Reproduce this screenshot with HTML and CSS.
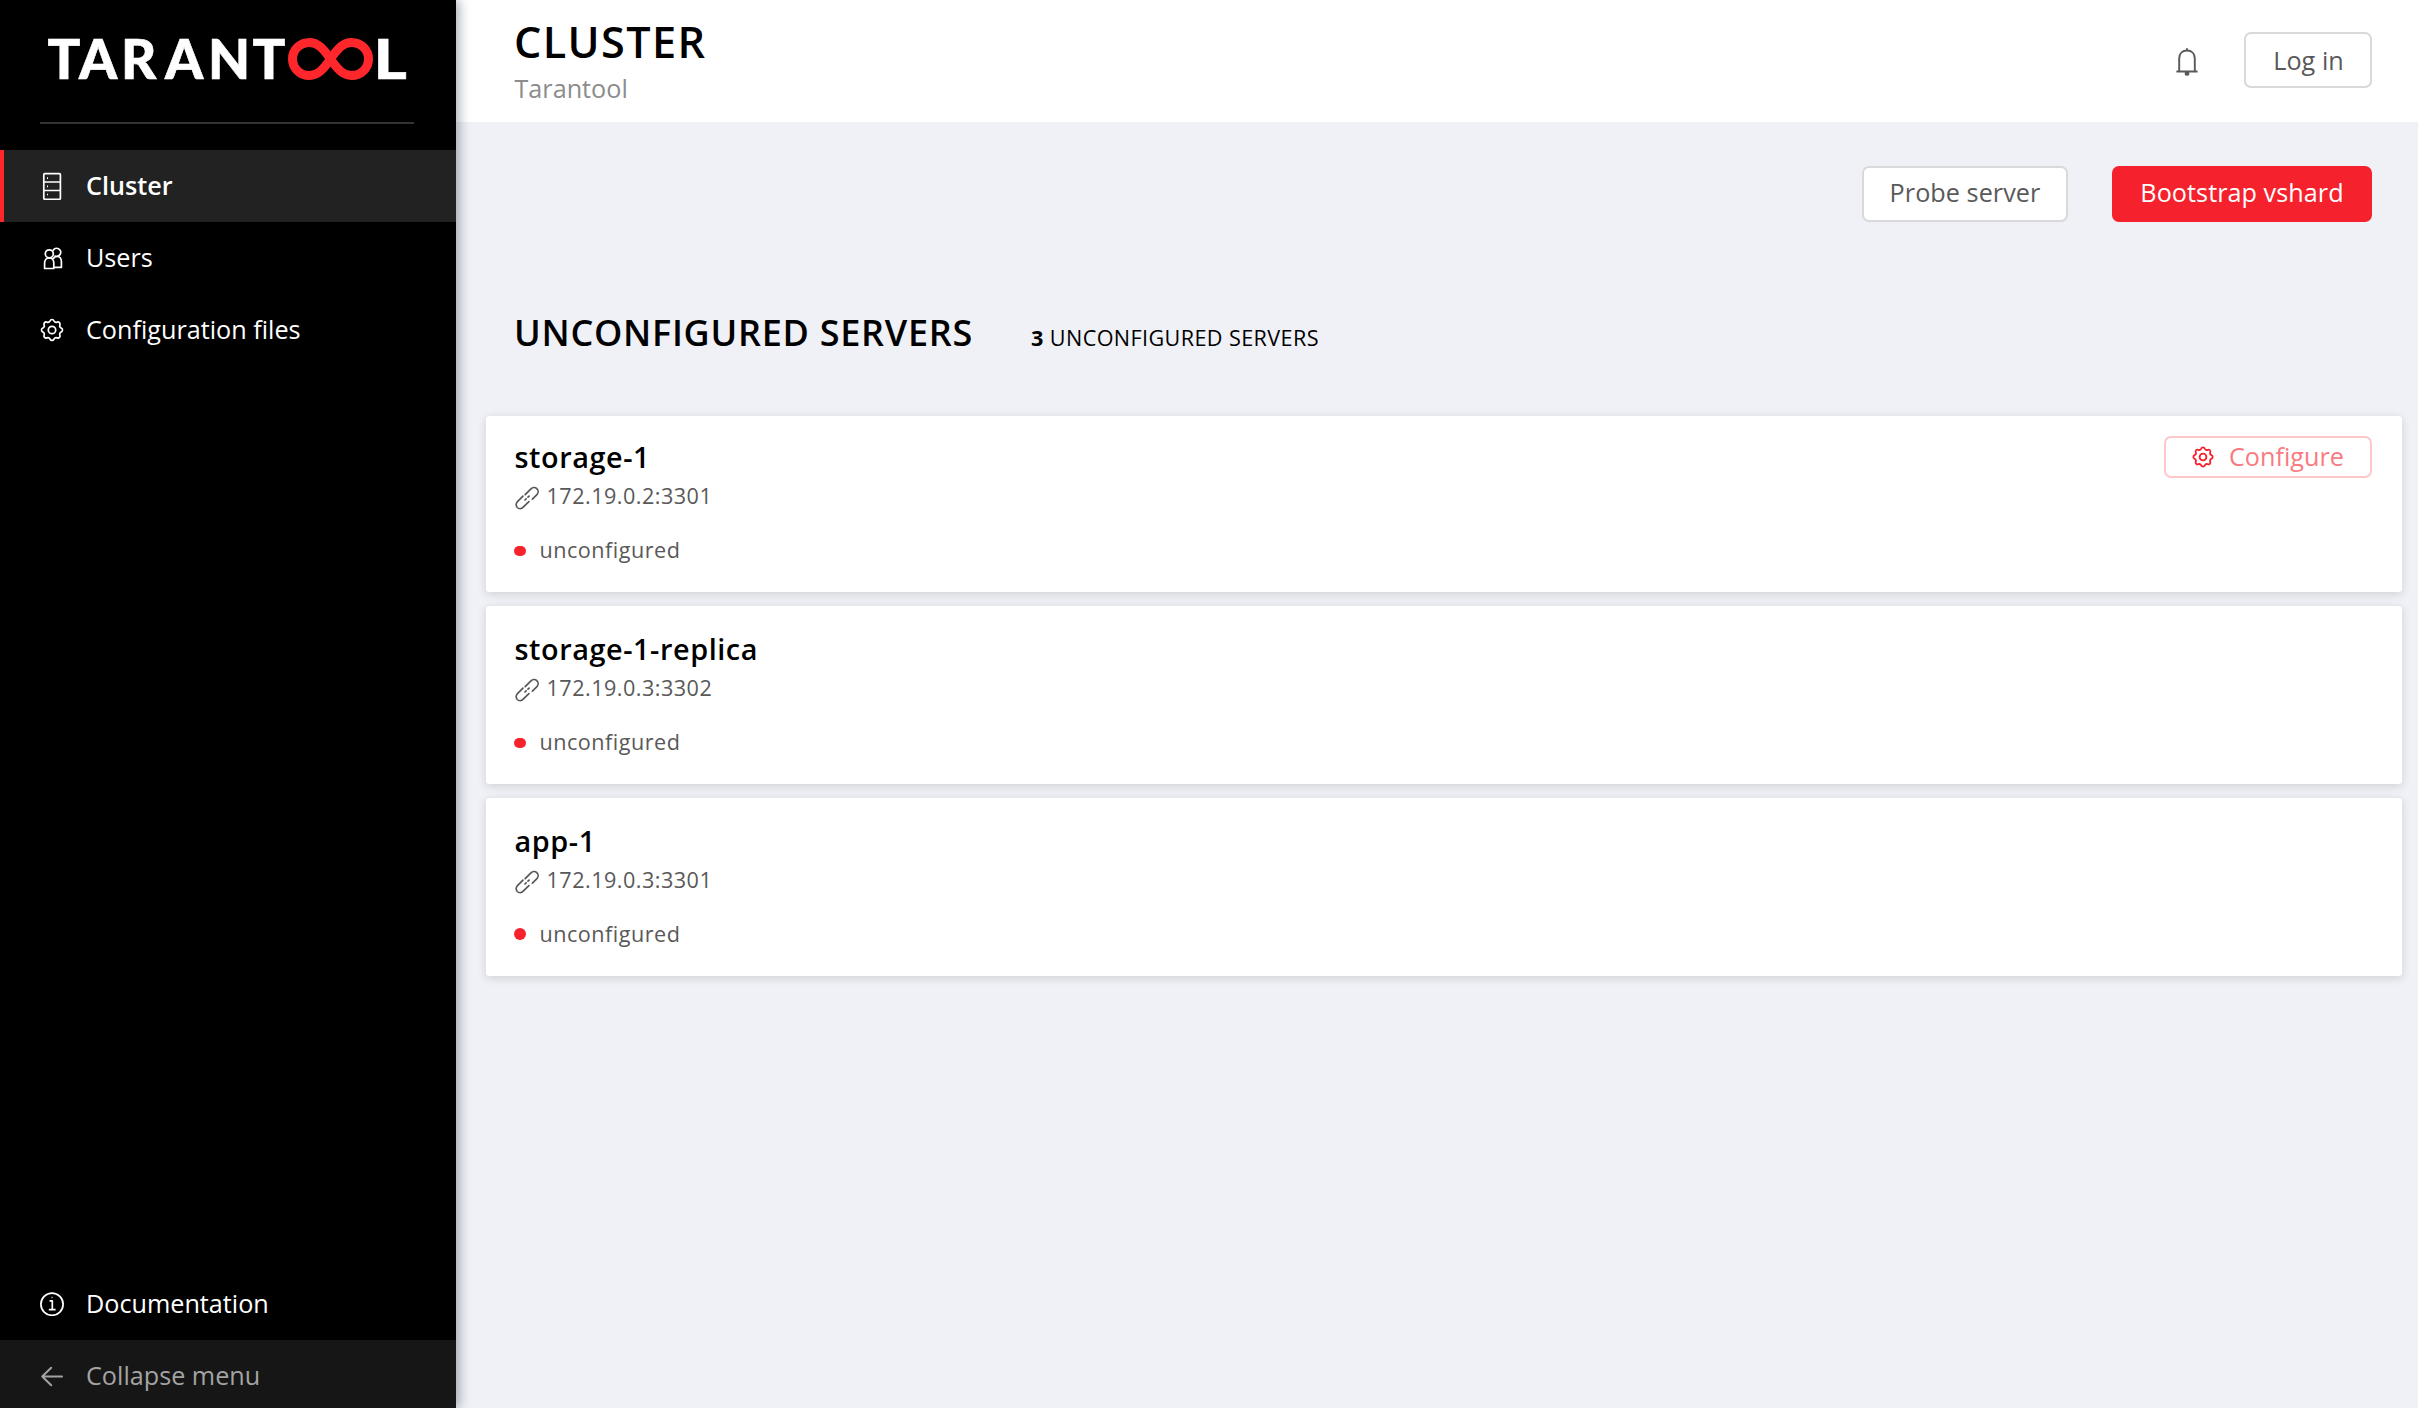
FILE: index.html
```html
<!DOCTYPE html>
<html lang="en">
<head>
<meta charset="utf-8">
<title>Cluster</title>
<link rel="stylesheet" href="styles.css">
</head>
<body>
<svg class="sprite" aria-hidden="true">
  <symbol id="gear" viewBox="-12 -12 24 24">
    <path d="M9.19-1.95A2.1 2.1 0 0 1 9.19 1.95A2.6 2.6 0 0 0 7.88 5.12A2.1 2.1 0 0 1 5.12 7.88A2.6 2.6 0 0 0 1.95 9.19A2.1 2.1 0 0 1-1.95 9.19A2.6 2.6 0 0 0-5.12 7.88A2.1 2.1 0 0 1-7.88 5.12A2.6 2.6 0 0 0-9.19 1.95A2.1 2.1 0 0 1-9.19-1.95A2.6 2.6 0 0 0-7.88-5.12A2.1 2.1 0 0 1-5.12-7.88A2.6 2.6 0 0 0-1.95-9.19A2.1 2.1 0 0 1 1.95-9.19A2.6 2.6 0 0 0 5.12-7.88A2.1 2.1 0 0 1 7.88-5.12A2.6 2.6 0 0 0 9.19-1.95Z"/>
    <circle r="3.7"/>
  </symbol>
  <symbol id="link" viewBox="0 0 24 24">
    <path d="M10.2 8.700L15.700 3.100C17.500 1.300 20.300 1.100 22 2.800C23.600 4.400 23.400 7.200 21.700 8.900L17.400 13.200M7.900 10.200L2.500 15.600C.800 17.300.700 19.900 2.300 21.500C3.900 23 6.500 22.900 8.200 21.200L13.900 15.600M10 14L11.100 12.900M13 11.200L14.100 10.100"/>
  </symbol>
</svg>
<div class="app">
  <aside class="sidebar">
    <div class="brand">
      <svg class="logo" width="374" height="122" viewBox="40 0 374 122" role="img" aria-label="Tarantool">
        <text class="logo-text" x="47.5 79 121 165 208 252.5" y="78.7">TARANT</text>
        <text class="logo-text" transform="translate(373.800 78.700) scale(1.160 1)">L</text>
        <path class="logo-loop" d="M330.5 59C323 48 317.500 42.500 309.500 42.500C300 42.500 292.500 49.800 292.500 59S300 75.500 309.500 75.500C317.500 75.500 323 70 330.500 59C338 48 343.500 42.500 351.500 42.500C361 42.500 368.500 49.800 368.500 59S361 75.500 351.500 75.500C343.500 75.500 338 70 330.500 59Z"/>
      </svg>
    </div>
    <nav class="menu">
      <a class="item active">
        <svg class="icon" width="24" height="28" viewBox="40 172 24 28"><rect x="43.800" y="173.700" width="16.600" height="25.600" rx="1"/><path d="M44 182H60M44 190.500H60M47 178.200H48M47 186.300H48M47 194.500H48"/></svg>
        <span>Cluster</span>
      </a>
      <a class="item">
        <svg class="icon" width="24" height="24" viewBox="40 246 24 24"><circle cx="49.300" cy="253.800" r="4"/><path d="M53 250.800A4 4 0 1 1 54.500 255.600M44.600 268.500V263C44.600 260 46.500 257.800 49.200 257.800S53.800 260 53.800 263V268.500ZM53.800 267.300H61.400V261.500C61.400 258.400 59.600 256.300 57.200 256.300C55.500 256.300 53.900 257.200 53.200 258.900"/></svg>
        <span>Users</span>
      </a>
      <a class="item">
        <svg class="icon" width="24" height="24"><use href="#gear"/></svg>
        <span>Configuration files</span>
      </a>
    </nav>
    <a class="item">
      <svg class="icon" width="24" height="24" viewBox="0 0 24 24"><circle cx="12" cy="12.200" r="11.100"/><path d="M9.500 8.800H12.300V17.600M8.800 17.600H15.600M11.600 5.500H12.500"/></svg>
      <span>Documentation</span>
    </a>
    <div class="collapse">
      <a class="item muted">
        <svg class="icon arrow" width="24" height="24" viewBox="0 0 24 24"><path d="M11.200 3.800L2.200 12.500L11.200 21.200M2.200 12.500H22"/></svg>
        <span>Collapse menu</span>
      </a>
    </div>
  </aside>
  <main class="main">
    <header class="header">
      <div>
        <h1 class="title">CLUSTER</h1>
        <div class="subtitle">Tarantool</div>
      </div>
      <div class="account">
        <svg class="bell" width="24" height="30" viewBox="0 0 24 30"><path d="M4.200 24V11.500C4.200 6.500 7.500 3.500 12 3.500S19.800 6.500 19.800 11.500V24M1.400 24.500H22.600M12 3.500V1.300"/><path class="clapper" d="M9.800 25H14.200V27.500Q14 28.800 12 28.800T9.800 27.500Z"/></svg>
        <button class="btn login">Log in</button>
      </div>
    </header>
    <div class="actions">
      <button class="btn probe">Probe server</button>
      <button class="btn primary">Bootstrap vshard</button>
    </div>
    <div class="section-head">
      <h2 class="section-title">UNCONFIGURED SERVERS</h2>
      <span class="count"><b>3</b> UNCONFIGURED SERVERS</span>
    </div>
    <section class="servers">
      <article class="card first">
        <div>
          <h3 class="name">storage-1</h3>
          <div class="uri"><svg class="link" width="24" height="24"><use href="#link"/></svg>172.19.0.2:3301</div>
          <div class="status"><i class="dot flat"></i>unconfigured</div>
        </div>
        <button class="configure"><svg class="icon" width="22" height="22"><use href="#gear"/></svg><span>Configure</span></button>
      </article>
      <article class="card">
        <div>
          <h3 class="name">storage-1-replica</h3>
          <div class="uri"><svg class="link" width="24" height="24"><use href="#link"/></svg>172.19.0.3:3302</div>
          <div class="status"><i class="dot flat"></i>unconfigured</div>
        </div>
      </article>
      <article class="card">
        <div>
          <h3 class="name">app-1</h3>
          <div class="uri"><svg class="link" width="24" height="24"><use href="#link"/></svg>172.19.0.3:3301</div>
          <div class="status"><i class="dot"></i>unconfigured</div>
        </div>
      </article>
    </section>
  </main>
</div>
</body>
</html>
```
FILE: styles.css
```css
* { box-sizing: border-box; }
body { margin: 0; font-family: "Open Sans", sans-serif; font-size: 25.2px; color: #000; background: #f0f1f6; }
h1, h2, h3 { margin: 0; font-weight: 600; }
button { font: inherit; margin: 0; padding: 0; }
.sprite { display: none; }
.app { display: flex; height: 1408px; overflow: hidden; }

.sidebar { flex: 0 0 456px; display: flex; flex-direction: column; background: #000; box-shadow: 3.6px 0 10.8px rgba(0, 21, 41, .35); z-index: 1; }
.brand { height: 124px; margin: 0 42px 26px 40px; border-bottom: 2px solid #333; }
.logo { display: block; }
.logo-text { font-family: Lato, sans-serif; font-weight: 900; font-size: 54.5px; fill: #fff; stroke: #fff; stroke-width: .6; }
.logo-loop { fill: none; stroke: #ff272c; stroke-width: 9; stroke-linejoin: round; }
.menu { flex: 1; }
.item { display: flex; align-items: center; gap: 22px; height: 72px; padding-left: 40px; color: #fff; letter-spacing: 0; }
.item span { padding-bottom: 2px; }
.item.active { background: #222; font-weight: 600; border-left: 4px solid #ff272c; padding-left: 36px; }
.item.muted { color: #a3a3a3; }
.collapse { height: 68px; background: #161616; overflow: hidden; }
.icon { flex: none; fill: none; stroke: currentColor; stroke-width: 1.7; stroke-linejoin: round; }
.arrow { stroke-width: 2; stroke-linecap: round; }

.main { flex: 1; min-width: 0; }
.header { display: flex; justify-content: space-between; height: 122px; padding: 13px 46px 0 58px; background: #fff; }
.title { font-size: 43.2px; line-height: 58px; letter-spacing: 1.38px; }
.subtitle { line-height: 34px; padding-left: .5px; color: #8c8c8c; }
.account { display: flex; align-items: flex-start; gap: 45px; padding-top: 19px; }
.bell { margin-top: 15px; fill: none; stroke: #595959; stroke-width: 1.9; }
.clapper { fill: #595959; stroke: none; }
.btn { height: 56px; border: 2px solid #d9d9d9; border-radius: 7px; background: #fff; color: #595959; letter-spacing: .05px; }
.login { width: 128px; padding-left: 1px; }
.probe { width: 206px; padding: 0 0 4px; }
.primary { width: 260px; padding: 0 0 4px; background: #f5222d; border-color: #f5222d; color: #fff; }
.actions { display: flex; justify-content: flex-end; gap: 44px; padding: 44px 46px 0; }
.section-head { display: flex; align-items: baseline; gap: 58px; padding: 87px 57px 59px 58px; }
.section-title { font-size: 36px; line-height: 48px; letter-spacing: .74px; }
.count { font-size: 21.6px; letter-spacing: .4px; }
.count b { font-weight: 700; }

.servers { display: flex; flex-direction: column; gap: 14px; padding: 0 16px 0 30px; }
.card { display: flex; justify-content: space-between; align-items: flex-start; height: 178px; padding: 23px 30px 0 28px; background: #fff; border-radius: 3.6px; box-shadow: 0 2px 10px rgba(0, 0, 0, .14); color: #595959; font-size: 21.6px; letter-spacing: .54px; }
.card.first { height: 176px; padding-top: 21px; }
.name { padding-left: .5px; font-size: 28.8px; line-height: 40px; letter-spacing: .58px; color: #000; }
.uri { display: flex; align-items: center; gap: 8px; margin-top: 1px; padding-left: .5px; line-height: 36px; letter-spacing: .48px; }
.link { fill: none; stroke: #595959; stroke-width: 1.7; stroke-linecap: round; margin-top: 3px; }
.status { display: flex; align-items: center; gap: 13.5px; margin-top: 18px; line-height: 36px; letter-spacing: .5px; }
.dot { width: 12px; height: 12px; border-radius: 6px; background: #f5222d; }
.dot.flat { height: 10px; border-radius: 5px; margin-top: 2px; }
.configure { display: flex; align-items: center; gap: 15px; width: 208px; height: 42px; margin-top: -1px; padding-left: 26px; border: 2px solid #fec8cb; border-radius: 7px; background: #fff; color: #f97a81; font-size: 25.2px; }
.configure span { padding-bottom: 2px; }
.configure .icon { color: #f5222d; stroke-width: 2; }
```
